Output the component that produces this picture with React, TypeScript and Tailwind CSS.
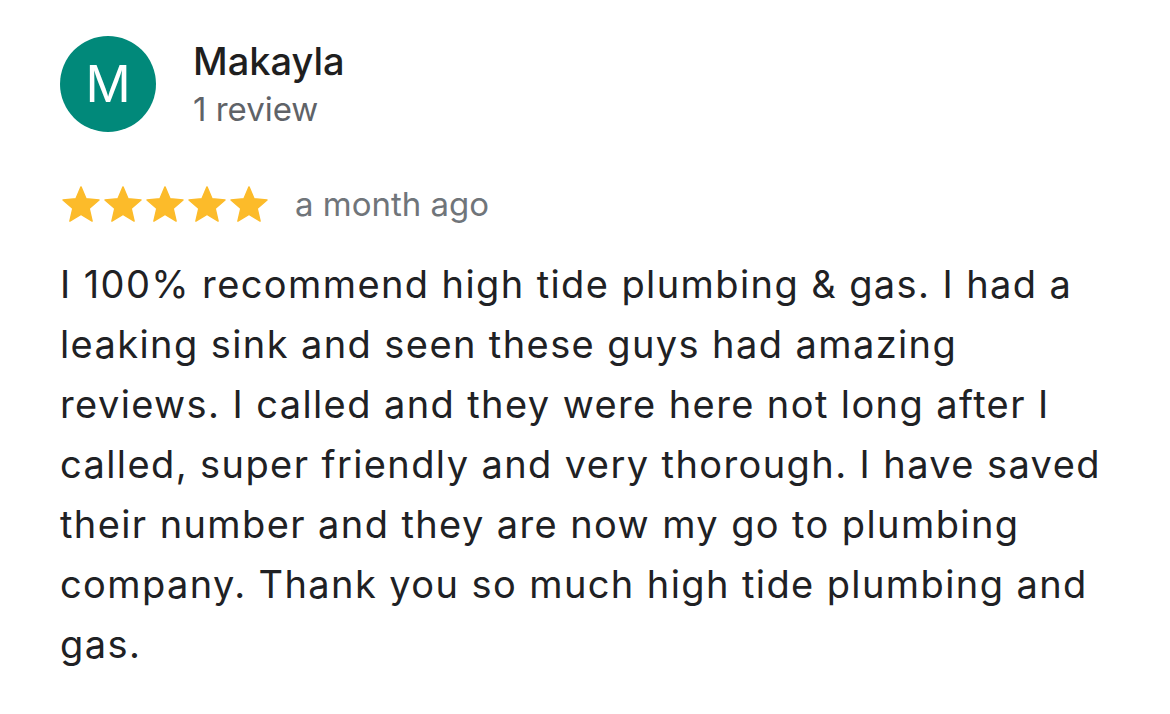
const review = {
  name: "Makayla",
  initial: "M",
  count: "1 review",
  when: "a month ago",
  rating: 5,
  text: "I 100% recommend high tide plumbing & gas. I had a leaking sink and seen these guys had amazing reviews. I called and they were here not long after I called, super friendly and very thorough. I have saved their number and they are now my go to plumbing company. Thank you so much high tide plumbing and gas.",
};

// Filled rating star, cropped tight to its own bounds
const StarIcon = () => (
  <svg
    viewBox="1.5 1.5 21 20"
    className="w-[38px] h-[36px] text-[#fcbb2a]"
    fill="currentColor"
    stroke="currentColor"
    strokeWidth={0.8}
    strokeLinejoin="round"
  >
    <path d="M12 17.27L18.18 21l-1.64-7.03L22 9.24l-7.19-.61L12 2 9.19 8.63 2 9.24l5.46 4.73L5.82 21z" />
  </svg>
);

const App = () => {
  return (
    <div
      className="w-[1170px] h-[714px] bg-white pl-[60px] pr-[60px] pt-[36px]"
      style={{ fontFamily: "Inter, 'Noto Sans', sans-serif" }}
    >
      {/* Reviewer */}
      <div className="flex items-start gap-[37px]">
        <div className="w-[96px] h-[96px] rounded-full bg-[#01897a] flex items-center justify-center text-white text-[50px] leading-none">
          {review.initial}
        </div>
        <div className="flex flex-col mt-[2px]">
          <span className="text-[38px] leading-[46px] font-medium text-[#1f1f1f]">
            {review.name}
          </span>
          <span className="mt-[5px] text-[33px] leading-[40px] text-[#5f6368]">
            {review.count}
          </span>
        </div>
      </div>

      {/* Rating */}
      <div className="flex items-center mt-[52px] h-[40px]">
        <div className="flex gap-[4px] pl-[2px]">
          {Array.from({ length: review.rating }).map((_, i) => (
            <StarIcon key={i} />
          ))}
        </div>
        <span className="ml-[27px] text-[33px] leading-[40px] text-[#70757a]">
          {review.when}
        </span>
      </div>

      {/* Body */}
      <p className="mt-[30px] text-[38px] leading-[60px] tracking-[1.4px] text-[#202124]">
        {review.text}
      </p>
    </div>
  );
};

export default App;
